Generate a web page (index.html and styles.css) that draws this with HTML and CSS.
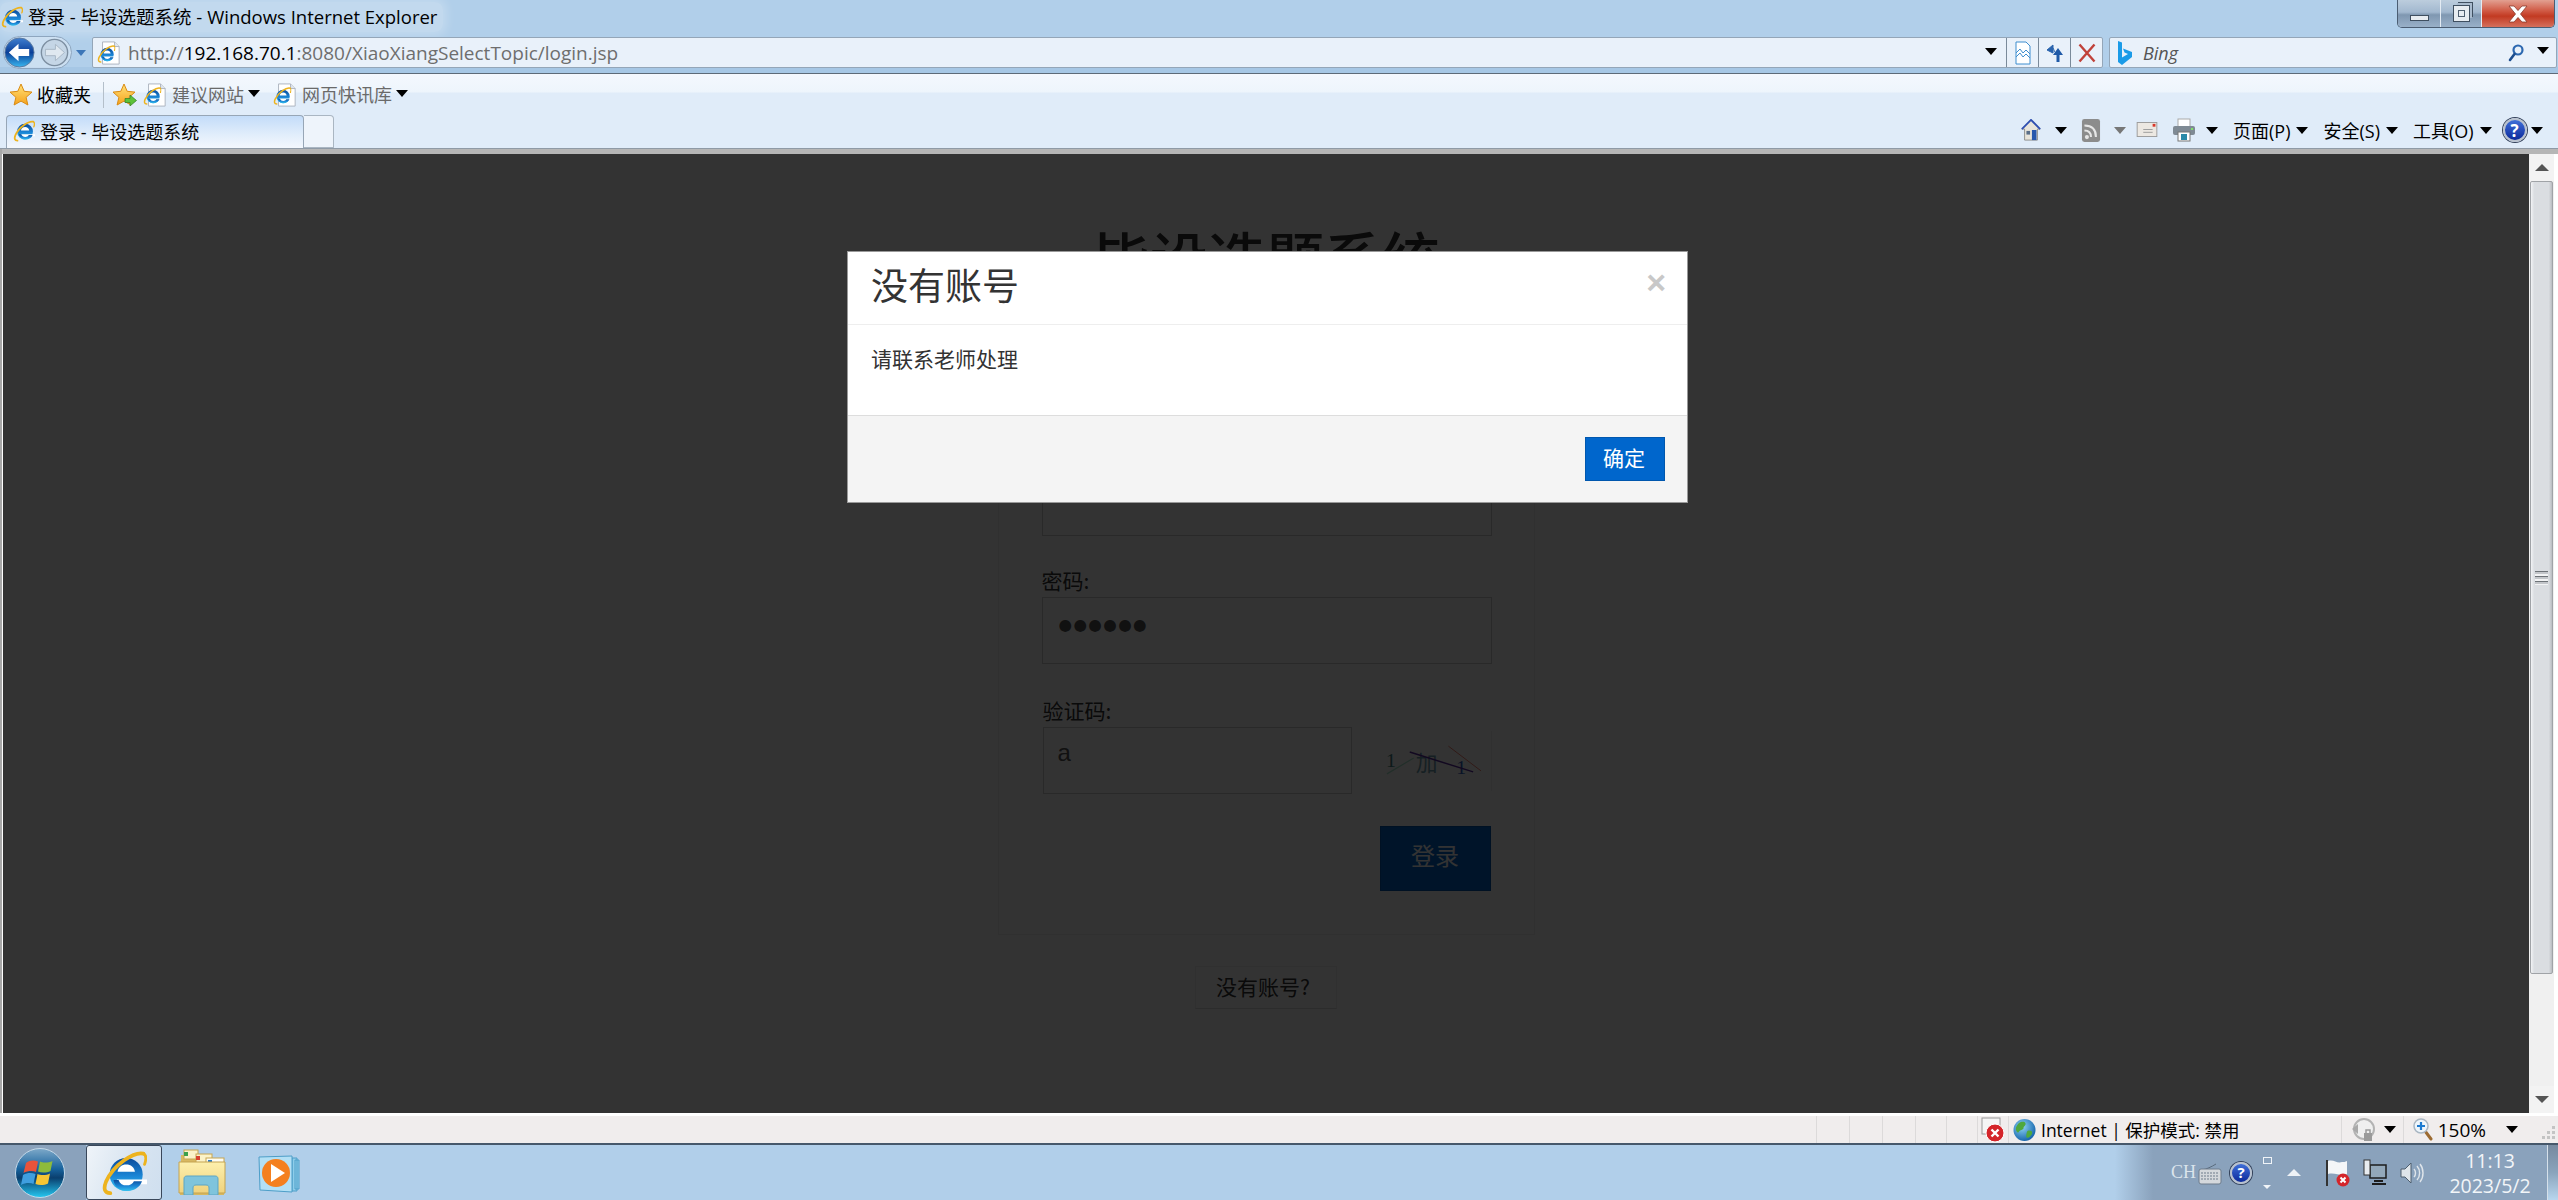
FILE: index.html
```html
<!DOCTYPE html>
<html lang="zh-CN">
<head>
<meta charset="utf-8">
<title>登录 - 毕设选题系统 - Windows Internet Explorer</title>
<link rel="stylesheet" href="styles.css">
</head>
<body>
<svg class="sprite" aria-hidden="true">
  <defs>
    <linearGradient id="g-e" x1="0" y1="0" x2="0" y2="1"><stop offset="0" stop-color="#0b4a9a"/><stop offset=".55" stop-color="#1b86d6"/><stop offset="1" stop-color="#36c0ee"/></linearGradient>
    <linearGradient id="g-star" x1="0" y1="0" x2="0" y2="1"><stop offset="0" stop-color="#ffe27a"/><stop offset="1" stop-color="#f6a21b"/></linearGradient>
    <linearGradient id="g-orb" x1="0" y1="0" x2="0" y2="1"><stop offset="0" stop-color="#7ea9c9"/><stop offset=".42" stop-color="#17629c"/><stop offset=".6" stop-color="#0a3f6e"/><stop offset="1" stop-color="#25c9f2"/></linearGradient>
    <linearGradient id="g-folder" x1="0" y1="0" x2="0" y2="1"><stop offset="0" stop-color="#fdf0ad"/><stop offset="1" stop-color="#efd27e"/></linearGradient>
    <linearGradient id="g-back" x1="0" y1="0" x2="0" y2="1"><stop offset="0" stop-color="#3f7fd0"/><stop offset=".5" stop-color="#0a3f98"/><stop offset="1" stop-color="#39b6ef"/></linearGradient>
    <radialGradient id="g-globe" cx=".4" cy=".35" r=".7"><stop offset="0" stop-color="#8fd4f5"/><stop offset="1" stop-color="#0f5fa8"/></radialGradient>
    <symbol id="i-ie" viewBox="0 0 32 32">
      <circle cx="17.500" cy="17" r="11.500" fill="url(#g-e)"/>
      <path d="M11.500 15.200C12 11.800 14.500 10 17.600 10s5.600 1.800 6 5.200z" fill="#fff"/>
      <path d="M11 20.600h21v3.200H23.600c-1.400 1.300-3.500 2-5.800 2-3.500 0-6-2-6.800-5.200z" fill="#fff"/>
      <path d="M12.200 20.800c.9 2.600 3 3.800 5.600 3.800 2.400 0 4.300-1 5.100-2.900h5.600c-1.200 4-5.400 6.800-10.400 6.800-5.300 0-8.800-3-9.400-7.700z" fill="url(#g-e)"/>
      <path d="M29.500 2.500C23 1 9 10 3.500 22c-2 5-1 8 3 8" fill="none" stroke="#edb31e" stroke-width="2.600" stroke-linecap="round"/>
      <path d="M29.500 2.500c2.200 1 2 4 .8 7.500" fill="none" stroke="#edb31e" stroke-width="2" stroke-linecap="round"/>
    </symbol>
    <symbol id="i-iepage" viewBox="0 0 26 26">
      <path d="M6 1h13l5 5v19H6z" fill="#fff" stroke="#aab2bd"/>
      <path d="M19 1v5h5" fill="#dfe6ee" stroke="#aab2bd"/>
      <use href="#i-ie" x="0" y="4" width="20" height="20"/>
    </symbol>
    <symbol id="i-star" viewBox="0 0 24 24">
      <path d="M12 1l3.200 7.300 7.800.8-5.900 5.200 1.800 7.700L12 18.100 5.100 22l1.800-7.700L1 9.100l7.800-.8z" fill="url(#g-star)" stroke="#d98b14" stroke-linejoin="round"/>
    </symbol>
  </defs>
</svg>

<div class="window">
  <header class="titlebar">
    <div class="title-glow">
      <svg class="ico-20"><use href="#i-ie"/></svg>
      <span class="title-text">登录 - 毕设选题系统 - Windows Internet Explorer</span>
    </div>
    <div class="win-controls">
      <div class="win-btn win-min"><span class="min-glyph"></span></div>
      <div class="win-btn win-max"><span class="max-glyph"></span></div>
      <div class="win-btn win-close">
        <svg width="24" height="18" viewBox="0 0 24 18"><path d="M3 1h5l4 4.500L16 1h5l-6.500 8L21 17h-5l-4-4.500L8 17H3l6.500-8z" fill="#fff" stroke="#8a3b2c" stroke-width=".8"/></svg>
      </div>
    </div>
  </header>

  <nav class="navbar">
    <div class="nav-pill">
      <div class="nav-round">
        <svg class="nav-back" viewBox="0 0 32 32"><circle cx="16" cy="16" r="15" fill="url(#g-back)" stroke="#5b7aa0"/><path d="M5 16l10-9v5.500h11v7H15V25z" fill="#fff"/></svg>
        <svg class="nav-fwd" viewBox="0 0 32 32"><circle cx="16" cy="16" r="14.500" fill="#c5d6e6" stroke="#7c8ea0" stroke-width="1.500"/><path d="M27 16l-10-9v5.500H6v7h11V25z" fill="#dfe8f0" stroke="#a5b4c2"/></svg>
      </div>
      <span class="nav-drop"></span>
    </div>
    <div class="addr-box">
      <svg class="ico-24"><use href="#i-iepage"/></svg>
      <span class="addr-url">http://<b>192.168.70.1</b>:8080/XiaoXiangSelectTopic/login.jsp</span>
      <span class="caret addr-caret"></span>
      <span class="addr-cell">
        <svg width="16" height="24" viewBox="0 0 16 24"><path d="M1 1h10l4 4v18H1z" fill="#fff" stroke="#3f8ecf"/><path d="M1 12l4-4 3 4 3-3 4 4M1 16l4-4 3 4 3-3 4 4" fill="none" stroke="#3f8ecf"/></svg>
      </span>
      <span class="addr-cell">
        <svg width="18" height="22" viewBox="0 0 18 22"><path d="M7 3L1 8l6 3zM7 6c1 2 1.500 3 1.500 4" fill="#2a64ae" stroke="#2a64ae"/><path d="M12 6l5 7h-3.500v7h-3v-7H7z" fill="#1f5aa8"/></svg>
      </span>
      <span class="addr-cell">
        <svg width="18" height="20" viewBox="0 0 18 20"><path d="M1.500 1.500l15 17M16.500 1.500l-15 17" stroke="#c0423a" stroke-width="2.400"/></svg>
      </span>
    </div>
    <div class="search-box">
      <svg width="16" height="26" viewBox="0 0 16 26"><path d="M1 1l4 1.500v15l6-3.500-3.500-1.500-1.500-4 9 3.500v5L5 25l-4-3z" fill="#1a9be8"/></svg>
      <span class="search-text">Bing</span>
      <svg class="search-icon" width="16" height="20" viewBox="0 0 16 20"><circle cx="10" cy="7" r="4.500" fill="none" stroke="#2c68b0" stroke-width="2.200"/><path d="M6.500 11L2 17" stroke="#1c4d8e" stroke-width="2.600" stroke-linecap="round"/></svg>
      <span class="caret search-caret"></span>
    </div>
  </nav>

  <div class="chrome-rows">
    <div class="favbar">
      <svg class="fav-star"><use href="#i-star"/></svg>
      <span class="fav-label">收藏夹</span>
      <span class="fav-sep"></span>
      <span class="fav-add">
        <svg class="ico-24"><use href="#i-star"/></svg>
        <svg class="fav-arrow" width="13" height="11" viewBox="0 0 13 11"><path d="M1 3.500h5V0l6.500 5.500L6 11V7.500H1z" fill="#5cc23a" stroke="#2f7d22" stroke-width=".7"/></svg>
      </span>
      <svg class="ico-24 fav-page"><use href="#i-iepage"/></svg>
      <span class="fav-link">建议网站</span>
      <span class="caret fav-caret"></span>
      <svg class="ico-24 fav-page2"><use href="#i-iepage"/></svg>
      <span class="fav-link">网页快讯库</span>
      <span class="caret fav-caret"></span>
    </div>
    <div class="tabrow">
      <div class="tab">
        <svg class="ico-20"><use href="#i-ie"/></svg>
        <span class="tab-text">登录 - 毕设选题系统</span>
      </div>
      <div class="tab-new"></div>
      <div class="tools">
        <svg class="tool-home" width="22" height="22" viewBox="0 0 22 24"><path d="M11 1L1 11h3v12h14V11h3z" fill="#e8e4da" stroke="#8a8a88"/><path d="M1 11L11 1l10 10" fill="none" stroke="#2f4fb0" stroke-width="2"/><rect x="12" y="12" width="5" height="11" fill="#2657ad"/><rect x="6" y="13" width="4" height="4" fill="#5a6e88"/></svg>
        <span class="caret tool-c1"></span>
        <svg class="tool-rss" width="22" height="23" viewBox="0 0 22 28"><rect width="22" height="28" rx="3" fill="#8c8c8c"/><circle cx="6" cy="22" r="2.500" fill="#e6e6e6"/><path d="M3 14c5 0 8 3 8 8M3 8c9 0 14 5 14 14" fill="none" stroke="#e6e6e6" stroke-width="2.500"/></svg>
        <span class="caret caret-gray tool-c2"></span>
        <svg class="tool-mail" width="22" height="15" viewBox="0 0 22 16"><rect x=".5" y=".5" width="21" height="15" fill="#ece8e2" stroke="#9a9a9a"/><rect x="17" y="2" width="3" height="3" fill="#d8362a"/><path d="M7 8h10M7 11h10" stroke="#9a9a9a"/></svg>
        <svg class="tool-print" width="24" height="24" viewBox="0 0 24 24"><rect x="6" y="1" width="12" height="9" fill="#fff" stroke="#aaa"/><rect x="1" y="8" width="22" height="9" rx="2" fill="#7f8a94"/><rect x="6" y="14" width="12" height="9" fill="#fff" stroke="#777"/><rect x="9" y="16" width="6" height="6" fill="#2a8aa8"/><rect x="19" y="10" width="2" height="2" fill="#7fe06a"/></svg>
        <span class="caret tool-c3"></span>
        <span class="tool-text">页面(P)</span>
        <span class="caret tool-c4"></span>
        <span class="tool-text tool-t2">安全(S)</span>
        <span class="caret tool-c4"></span>
        <span class="tool-text tool-t2">工具(O)</span>
        <span class="caret tool-c4"></span>
        <span class="help-orb tool-help">?</span>
        <span class="caret tool-c5"></span>
      </div>
    </div>
  </div>

  <div class="viewport-row">
    <main class="viewport">
      <div class="page">
        <h1 class="page-title">毕设选题系统</h1>
        <form class="panel">
          <label class="field-label">用户名:</label>
          <input class="field" type="text" value="">
          <label class="field-label">密码:</label>
          <input class="field field-dots" type="text" value="●●●●●●">
          <div class="captcha-block">
            <label class="field-label">验证码:</label>
            <div class="captcha-row">
              <input class="field field-code" type="text" value="a">
              <svg class="captcha" width="111" height="60" viewBox="0 0 111 60">
                <text x="5" y="36" class="cap-t">1</text>
                <text x="35" y="40" class="cap-t cap-cn">加</text>
                <text x="76" y="43" class="cap-t cap-blue">1</text>
                <path d="M6 43L33 27" stroke="#a8e6cc" stroke-width="1.200"/>
                <path d="M29 21L93 41" stroke="#5a2ca0" stroke-width="1.500"/>
                <path d="M68 15L101 40" stroke="#f08070"/>
              </svg>
            </div>
          </div>
          <div class="actions"><button class="login-btn" type="button">登录</button></div>
        </form>
        <a class="no-account">没有账号?</a>
      </div>
      <div class="backdrop"></div>
      <section class="modal">
        <div class="modal-head">
          <h2 class="modal-title">没有账号</h2>
          <span class="modal-x">×</span>
        </div>
        <div class="modal-body">请联系老师处理</div>
        <div class="modal-foot"><button class="ok-btn" type="button">确定</button></div>
      </section>
    </main>
    <div class="scrollbar">
      <div class="sb-btn"><span class="sb-up"></span></div>
      <div class="sb-thumb"><span class="sb-grip"></span></div>
      <div class="sb-track"></div>
      <div class="sb-btn"><span class="sb-down"></span></div>
    </div>
  </div>

  <footer class="statusbar">
    <span class="st-sep st-a"></span><span class="st-sep st-b"></span><span class="st-sep st-b"></span><span class="st-sep st-b"></span><span class="st-sep st-c"></span><span class="st-sep st-c"></span>
    <svg class="st-err" width="24" height="26" viewBox="0 0 24 26"><rect x="1" y="1" width="18" height="16" fill="#f5f5f5" stroke="#9a9a9a"/><circle cx="14" cy="16" r="9" fill="#d4252a" stroke="#fff"/><path d="M10.500 12.500l7 7M17.500 12.500l-7 7" stroke="#fff" stroke-width="2.400"/></svg>
    <span class="st-sep st-d"></span>
    <svg class="st-globe" width="23" height="24" viewBox="0 0 24 24"><circle cx="12" cy="12" r="11.500" fill="url(#g-globe)"/><path d="M6 5c3-2 6-2 7 0s-2 3-2 5-4 2-5 4-3-1-3-3 1-4 3-6zM15 13c3-1 5 0 5 2s-3 5-5 5-1-5 0-7z" fill="#4fa83e"/></svg>
    <span class="st-text">Internet | 保护模式: 禁用</span>
    <span class="st-sep st-e"></span>
    <svg class="st-lock" width="24" height="24" viewBox="0 0 24 24"><circle cx="13" cy="11" r="10" fill="#efefef" stroke="#b3b3b3" stroke-width="2"/><path d="M1 11l6-5v10z" fill="#a9a9a9"/><rect x="13" y="15" width="8" height="8" fill="#9a9a9a"/><path d="M15 15v-3h4v3" fill="none" stroke="#9a9a9a" stroke-width="1.500"/></svg>
    <span class="caret st-c1"></span>
    <span class="st-sep st-f"></span>
    <svg class="st-zoom" width="20" height="23" viewBox="0 0 20 23"><path d="M12 13l6 8" stroke="#9c6b32" stroke-width="3" stroke-linecap="round"/><circle cx="8" cy="8" r="7" fill="#eef5fb" stroke="#a9b6c2" stroke-width="1.500"/><path d="M8 4v8M4 8h8" stroke="#1c7ad0" stroke-width="2.200"/></svg>
    <span class="st-pct">150%</span>
    <span class="caret st-c2"></span>
    <svg class="st-grip" width="22" height="18" viewBox="0 0 22 18"><g fill="#c4c4c4"><rect x="16" y="1" width="3" height="3"/><rect x="11" y="6" width="3" height="3"/><rect x="16" y="6" width="3" height="3"/><rect x="6" y="11" width="3" height="3"/><rect x="11" y="11" width="3" height="3"/><rect x="16" y="11" width="3" height="3"/></g></svg>
  </footer>

  <div class="taskbar">
    <div class="start">
      <svg width="50" height="50" viewBox="0 0 50 50">
        <circle cx="25" cy="25" r="24.500" fill="url(#g-orb)" stroke="#c4d8e8"/>
        <path d="M11 15c4-3 8-3 12-1.500L21 24c-3-1.500-8-1.500-12.500 1z" fill="#e8533a"/>
        <path d="M25 13.500c3 1.500 8 1.500 12.500-.5l-2 10c-4 2-9 2-12.500.5z" fill="#8dbb3c"/>
        <path d="M8 27c4-2.500 9-2.500 12.500-1L18.500 36c-3-1.500-8-1.500-12.500 1z" fill="#3f9fe0"/>
        <path d="M22.500 26c3 1.500 9 1.500 12.500-.5l-2 10c-4 2-9 2-12.500.5z" fill="#f6c534"/>
      </svg>
    </div>
    <div class="task-ie"><svg class="task-ie-ico"><use href="#i-ie"/></svg></div>
    <svg class="task-folder" width="48" height="46" viewBox="0 0 48 46">
      <path d="M3 6h12l2 2h14l2 3h12l1 35H2z" fill="#d8b860"/>
      <rect x="6" y="1" width="14" height="9" fill="#fbf3c8" stroke="#c7a550"/><rect x="6" y="3" width="4" height="4" fill="#3ca04a"/>
      <rect x="18" y="5" width="16" height="9" fill="#fbf3c8" stroke="#c7a550"/><rect x="18" y="7" width="4" height="4" fill="#d8432e"/>
      <rect x="28" y="9" width="18" height="9" fill="#fdfdf5" stroke="#c7a550"/><rect x="30" y="11" width="4" height="4" fill="#2d7fc8"/>
      <path d="M1 13h46v31H1z" fill="url(#g-folder)" stroke="#c4a350"/>
      <path d="M6 46v-16c0-2 1-3 3-3h28c2 0 3 1 3 3v16h-9v-7c0-2-1-3-3-3H18c-2 0-3 1-3 3v7z" fill="#7fc4dc" stroke="#5da5c4"/>
    </svg>
    <svg class="task-wmp" width="46" height="42" viewBox="0 0 46 42">
      <path d="M34 3h5v33h-5zM37 5h4v29h-4z" fill="#8ecdea" stroke="#4d9ec8"/>
      <path d="M1 2l33-1v36L2 35z" fill="#b3e0f5" stroke="#4d9ec8"/>
      <circle cx="18" cy="18" r="14" fill="#f4801f"/>
      <path d="M13 9l14 9-14 9z" fill="#fff"/>
    </svg>
    <div class="tray">
      <span class="tray-ch">CH</span>
      <svg class="tray-kb" width="24" height="24" viewBox="0 0 24 24"><path d="M4 9c5-1 9-3 14-6" fill="none" stroke="#5a6b7c"/><rect x="1" y="8" width="22" height="15" rx="2" fill="#d4d8dc" stroke="#6e7d8c"/><path d="M3 12h18M3 15h18M3 18h18" stroke="#6e7d8c" stroke-dasharray="2 1"/></svg>
      <span class="help-orb tray-help">?</span>
      <div class="tray-small"><span class="tray-sq"></span><span class="tray-tri"></span></div>
      <span class="tray-up"></span>
      <svg class="tray-flag" width="24" height="28" viewBox="0 0 24 28"><path d="M1 1v26" stroke="#333" stroke-width="2"/><path d="M2 2c6-2 9 3 14 1 2 0 3 0 5-1v13c-5 3-12-2-19 0z" fill="#f4f6f8"/><circle cx="17" cy="21" r="6.500" fill="#d4252a"/><path d="M14.500 18.500l5 5M19.500 18.500l-5 5" stroke="#fff" stroke-width="2"/></svg>
      <svg class="tray-net" width="24" height="28" viewBox="0 0 24 28"><rect x="7" y="6" width="16" height="13" fill="#93a8ba" stroke="#1c1c1c" stroke-width="1.500"/><path d="M11 22h9M9 25h14" stroke="#1c1c1c" stroke-width="2"/><rect x="1" y="1" width="6" height="15" fill="#e8ecf0" stroke="#333"/></svg>
      <svg class="tray-vol" width="24" height="24" viewBox="0 0 24 24"><path d="M1 8h4l6-6v20l-6-6H1z" fill="#dfe5ea" stroke="#4f5f6e"/><path d="M14 8c2 2 2 6 0 8M17 5c3.500 4 3.500 10 0 14M20 3c4 5 4 13 0 18" fill="none" stroke="#dfe5ea" stroke-width="1.400"/></svg>
      <div class="tray-clock"><span class="clock-t">11:13</span><span class="clock-d">2023/5/2</span></div>
      <div class="show-desktop"></div>
    </div>
  </div>
</div>
</body>
</html>
```

FILE: styles.css
```css
* { box-sizing: border-box; }
html, body { margin: 0; padding: 0; height: 100%; overflow: hidden; }
body { font-family: "Open Sans", "Noto Sans CJK SC", sans-serif; color: #000; }
.sprite { position: absolute; width: 0; height: 0; }
.window { width: 2558px; height: 1200px; display: flex; flex-direction: column; background: #b1cfea; }
.ico-20 { width: 22px; height: 22px; flex: none; }
.ico-24 { width: 24px; height: 24px; flex: none; }
.caret { width: 0; height: 0; flex: none; border-left: 6px solid transparent; border-right: 6px solid transparent; border-top: 7px solid #000; }
.caret-gray { border-top-color: #777; }

/* title bar */
.titlebar { height: 37px; flex: none; display: flex; align-items: flex-start; }
.title-glow { height: 30px; margin-top: 2px; padding: 0 6px 0 1px; display: flex; align-items: center; gap: 5px; background: rgba(255,255,255,.22); box-shadow: 0 0 10px 4px rgba(255,255,255,.22); border-radius: 8px; }
.title-text { font-size: 18.500px; white-space: nowrap; line-height: 30px; }
.win-controls { margin-left: auto; margin-right: 3px; width: 158px; height: 28px; display: flex; border: 1px solid #4b5d72; border-top: 0; border-radius: 0 0 5px 5px; overflow: hidden; }
.win-btn { height: 100%; display: flex; align-items: center; justify-content: center; }
.win-min, .win-max { width: 43px; background: linear-gradient(#bccddd, #a2b8cf 45%, #7f97b1 55%, #99b0c8); border-right: 1px solid #e3ebf3; }
.win-max { width: 41px; }
.win-close { flex: 1; background: linear-gradient(#e2a091, #d05a45 40%, #c23a22 60%, #d5705c); }
.min-glyph { width: 19px; height: 6px; margin-top: 9px; background: #e7ecf1; border: 1px solid #3f4f60; }
.max-glyph { width: 15px; height: 15px; background: #e7ecf1; border: 4px solid #e7ecf1; outline: 1px solid #3f4f60; box-shadow: inset 0 0 0 1px #4f5f70, 3px -3px 0 0 #a9bbce, 4px -4px 0 0 #3f4f60; }

/* nav bar */
.navbar { height: 37px; flex: none; display: flex; align-items: flex-start; border-bottom: 1px solid #5d6a78; box-shadow: inset 0 -6px 0 #a6c7e5; }
.nav-pill { width: 92px; height: 31px; flex: none; display: flex; align-items: center; padding-left: 3px; }
.nav-round { height: 33px; flex: none; display: flex; align-items: center; gap: 4px; padding-right: 1px; background: rgba(235,242,250,.45); border: 1px solid #8ea6bf; border-radius: 17px; }
.nav-back { width: 31px; height: 31px; flex: none; }
.nav-fwd { width: 31px; height: 29px; flex: none; }
.nav-drop { width: 0; height: 0; margin-left: 4px; border-left: 5px solid transparent; border-right: 5px solid transparent; border-top: 6px solid #3c76b8; }
.addr-box { width: 2011px; height: 31px; flex: none; display: flex; align-items: center; padding-left: 4px; background: #e9f1fa; border: 1px solid #94a6b8; border-radius: 2px; }
.addr-url { flex: 1; margin-left: 7px; font-size: 19px; color: #6e6e6e; white-space: nowrap; }
.addr-url b { color: #000; font-weight: 400; }
.addr-caret { margin-right: 9px; margin-top: -3px; }
.addr-cell { width: 32px; height: 100%; flex: none; display: flex; align-items: center; justify-content: center; border-left: 1px solid #7a8a9a; }
.search-box { width: 448px; height: 31px; flex: none; margin-left: 6px; display: flex; align-items: center; padding-left: 7px; background: #e9f1fa; border: 1px solid #94a6b8; border-radius: 2px; }
.search-text { flex: 1; margin-left: 10px; font-size: 18px; font-style: italic; color: #555; }
.search-icon { margin-right: 13px; }
.search-caret { margin-right: 7px; margin-top: -4px; }

/* favourites + tabs */
.chrome-rows { height: 75px; flex: none; background: linear-gradient(#f4f8fe, #eef5fc 18px, #e0ecf9 19px, #e0ecf9); border-bottom: 1px solid #8f9aa6; }
.favbar { height: 41px; display: flex; align-items: center; padding-left: 9px; }
.fav-star { width: 24px; height: 24px; flex: none; }
.fav-label { margin-left: 4px; margin-top: -2px; font-size: 18px; }
.fav-sep { width: 1px; height: 26px; margin-left: 12px; background: #b4bfca; }
.fav-add { position: relative; width: 24px; height: 24px; margin-left: 8px; }
.fav-arrow { position: absolute; right: -1px; bottom: 1px; }
.fav-page { margin-left: 7px; }
.fav-page2 { margin-left: 13px; }
.fav-link { margin-left: 5px; margin-top: -2px; font-size: 18px; color: #6a6a6a; }
.fav-caret { margin-left: 4px; margin-top: -2px; }
.tabrow { height: 33px; display: flex; padding-left: 6px; }
.tab { width: 298px; height: 33px; flex: none; display: flex; align-items: center; gap: 5px; padding: 0 0 2px 6px; background: linear-gradient(#c3dcf9, #e2eefb 60%, #f3f7fd); border: 1px solid #97a6b6; border-bottom: 0; border-radius: 4px 4px 0 0; }
.tab-text { font-size: 18px; white-space: nowrap; }
.tab-new { width: 30px; height: 33px; flex: none; background: #eef4fb; border: 1px solid #aab6c2; border-left: 0; border-radius: 0 4px 0 0; }
.tools { flex: 1; display: flex; align-items: center; padding-left: 1686px; height: 30px; }
.tool-home { flex: none; }
.tool-c1 { margin-left: 13px; }
.tool-rss { margin-left: 13px; flex: none; }
.tool-c2 { margin-left: 12px; }
.tool-mail { margin-left: 10px; flex: none; margin-top: -1px; }
.tool-print { margin-left: 14px; flex: none; }
.tool-c3 { margin-left: 10px; }
.tool-text { margin-left: 15px; font-size: 18px; white-space: nowrap; }
.tool-t2 { margin-left: 15px; }
.tool-c4 { margin-left: 6px; }
.tool-help { margin-left: 11px; }
.tool-c5 { margin-left: 4px; }
.help-orb { width: 24px; height: 24px; flex: none; display: flex; align-items: center; justify-content: center; border-radius: 50%; background: linear-gradient(#3f6fd8, #0c2a9c); border: 2px solid #b9c2cf; box-shadow: 0 0 0 1px #33415a; color: #fff; font-size: 17px; font-weight: 700; line-height: 1; }

/* page area */
.viewport-row { height: 964px; flex: none; display: flex; padding: 5px 4px 0 1px; background: linear-gradient(#b6b6b6 5px, #fff 5px); border-left: 2px solid #a8a8a8; }
.viewport { position: relative; width: 2526px; height: 959px; flex: none; overflow: hidden; background: #fff; font-family: "Noto Sans CJK SC", sans-serif; }
.page { display: flex; flex-direction: column; align-items: center; padding-top: 52px; }
.page-title { margin: 0 0 88px; font-size: 58px; font-weight: 500; line-height: 100px; color: #333; }
.panel { width: 537px; padding: 44px 43px 43px; background: #fff; border: 1px solid #f0f0f0; display: flex; flex-direction: column; }
.field-label { display: block; height: 30px; font-size: 21px; line-height: 27px; color: #333; }
.field { width: 450px; height: 67px; padding: 0 17px 12px; margin-bottom: 31px; background: #fff; border: 1px solid #ccc; font-family: "Liberation Sans", sans-serif; font-size: 24px; color: #555; flex: none; outline: 0; }
.field-dots { margin-bottom: 33px; font-family: "DejaVu Sans", sans-serif; font-size: 15.500px; letter-spacing: 1.400px; color: #555; padding-left: 16px; }
.captcha-block { padding-left: 1px; }
.captcha-row { display: flex; align-items: center; height: 67px; }
.field-code { width: 309px; margin-bottom: 0; padding: 0 14px 16px; }
.captcha { margin-left: 29px; background: #fff; border-right: 1px solid #f0f0f0; flex: none; }
.cap-t { font-family: "Liberation Serif", serif; font-size: 20px; fill: #408080; }
.cap-cn { font-family: "Noto Sans CJK SC", sans-serif; font-size: 22px; fill: #70a0b0; }
.cap-blue { fill: #3060c0; }
.actions { margin-top: 32px; display: flex; justify-content: flex-end; }
.login-btn { width: 111px; height: 65px; padding: 0 0 8px; background: #0066cc; border: 1px solid #0057ae; font-family: inherit; font-size: 24px; color: #fff; }
.no-account { width: 142px; height: 43px; margin-top: 31px; padding: 0 6px 4px 0; display: flex; align-items: center; justify-content: center; border: 1px solid #eee; border-bottom-color: #ddd; font-size: 21px; color: #333; }

.backdrop { position: absolute; inset: 0; background: rgba(0,0,0,.8); }
.modal { position: absolute; left: 844px; top: 97px; width: 841px; height: 252px; display: flex; flex-direction: column; background: #fff; border: 1px solid #999; }
.modal-head { height: 73px; flex: none; display: flex; align-items: center; justify-content: space-between; padding: 0 21px 8px 23px; border-bottom: 1px solid #eee; }
.modal-title { margin: 0; font-size: 37px; font-weight: 400; line-height: 50px; color: #333; }
.modal-x { margin-top: -4px; font-family: "Liberation Sans", sans-serif; font-size: 34px; font-weight: 700; line-height: 1; color: #c8c8c8; }
.modal-body { height: 90px; flex: none; padding: 17px 24px 0 23px; font-size: 21px; line-height: 32px; color: #333; }
.modal-foot { flex: 1; display: flex; justify-content: flex-end; align-items: flex-start; padding: 21px 22px 0 0; background: #f4f4f4; border-top: 1px solid #ddd; }
.ok-btn { width: 80px; height: 44px; padding: 0 2px 5px 0; background: #0066cc; border: 1px solid #0057ae; font-family: inherit; font-size: 21px; color: #fff; }

/* scrollbar */
.scrollbar { width: 25px; height: 959px; flex: none; display: flex; flex-direction: column; background: #f0f0f0; padding-left: 1px; }
.sb-btn { height: 27px; flex: none; display: flex; align-items: center; justify-content: center; background: #f3f3f3; }
.sb-up, .sb-down { width: 0; height: 0; border-left: 7px solid transparent; border-right: 7px solid transparent; }
.sb-up { border-bottom: 7px solid #555; }
.sb-down { border-top: 7px solid #555; }
.sb-thumb { height: 793px; flex: none; width: 23px; display: flex; align-items: center; justify-content: center; background: linear-gradient(90deg, #f2f3f5, #dadde1 15%, #dadde1 85%, #b9bcc0); border: 1px solid #a0a3a7; border-radius: 2px; }
.sb-grip { width: 13px; height: 14px; background: repeating-linear-gradient(#6e7378 0 1px, #c3c6ca 1px 3px, #f2f3f4 3px 5px); }
.sb-track { flex: 1; }

/* status bar */
.statusbar { height: 32px; flex: none; display: flex; align-items: center; background: #f0eded; border-top: 3px solid #fff; border-bottom: 2px solid #46586b; }
.st-sep { width: 1px; height: 27px; flex: none; background: #dcdada; }
.st-a { margin-left: 1816px; }
.st-b { margin-left: 32px; }
.st-c { margin-left: 30px; }
.st-err { margin-left: 3px; flex: none; }
.st-d { margin-left: 3px; }
.st-globe { margin-left: 4px; flex: none; }
.st-text { margin-left: 5px; width: 307px; font-size: 17.500px; white-space: nowrap; }
.st-lock { margin-left: 9px; flex: none; }
.st-c1 { margin-left: 9px; }
.st-f { margin-left: 7px; }
.st-zoom { margin-left: 9px; flex: none; }
.st-pct { margin-left: 5px; width: 70px; font-size: 19px; }
.st-c2 { margin-left: 0; }
.st-grip { margin-left: 18px; margin-top: 8px; flex: none; }

/* taskbar */
.taskbar { height: 55px; flex: none; display: flex; align-items: stretch; background: #b1cfea; }
.start { width: 86px; flex: none; display: flex; align-items: center; padding-left: 15px; background: #8aa2bc; }
.task-ie { width: 76px; flex: none; display: flex; align-items: center; justify-content: center; background: linear-gradient(110deg, #eff4f9, #d9e5f1 50%, #cfdfef); border: 1px solid #39475a; border-radius: 3px; }
.task-ie-ico { width: 46px; height: 46px; }
.task-folder { flex: none; margin: 4px 0 0 16px; }
.task-wmp { flex: none; margin: 10px 0 0 32px; }
.tray { flex: 1; display: flex; align-items: center; padding-left: 1867px; background: linear-gradient(90deg, #b1cfea 1811px, #8aa2bc 1849px); color: #fff; }
.tray-ch { font-family: "Liberation Serif", serif; font-size: 18px; color: #dbe4ec; width: 27px; }
.tray-kb { flex: none; }
.tray-help { margin-left: 8px; width: 22px; height: 22px; font-size: 15px; }
.tray-small { width: 10px; margin-left: 10px; height: 32px; display: flex; flex-direction: column; justify-content: space-between; align-items: center; }
.tray-sq { width: 9px; height: 7px; border: 1px solid #f0f4f8; }
.tray-tri { width: 0; height: 0; border-left: 4px solid transparent; border-right: 4px solid transparent; border-top: 4px solid #f0f4f8; }
.tray-up { width: 0; height: 0; margin-left: 15px; border-left: 7px solid transparent; border-right: 7px solid transparent; border-bottom: 7px solid #eef2f6; }
.tray-flag { margin-left: 25px; flex: none; }
.tray-net { margin-left: 13px; flex: none; }
.tray-vol { margin-left: 13px; flex: none; }
.tray-clock { width: 106px; margin-left: 13px; display: flex; flex-direction: column; align-items: center; font-size: 19.500px; line-height: 25px; color: #f2f5f8; }
.show-desktop { width: 15px; height: 55px; flex: none; margin-left: 4px; background: linear-gradient(#76899f, #8aa4bc 50%, #b9d6ee); border-left: 1px solid #d5e0ea; }
```
